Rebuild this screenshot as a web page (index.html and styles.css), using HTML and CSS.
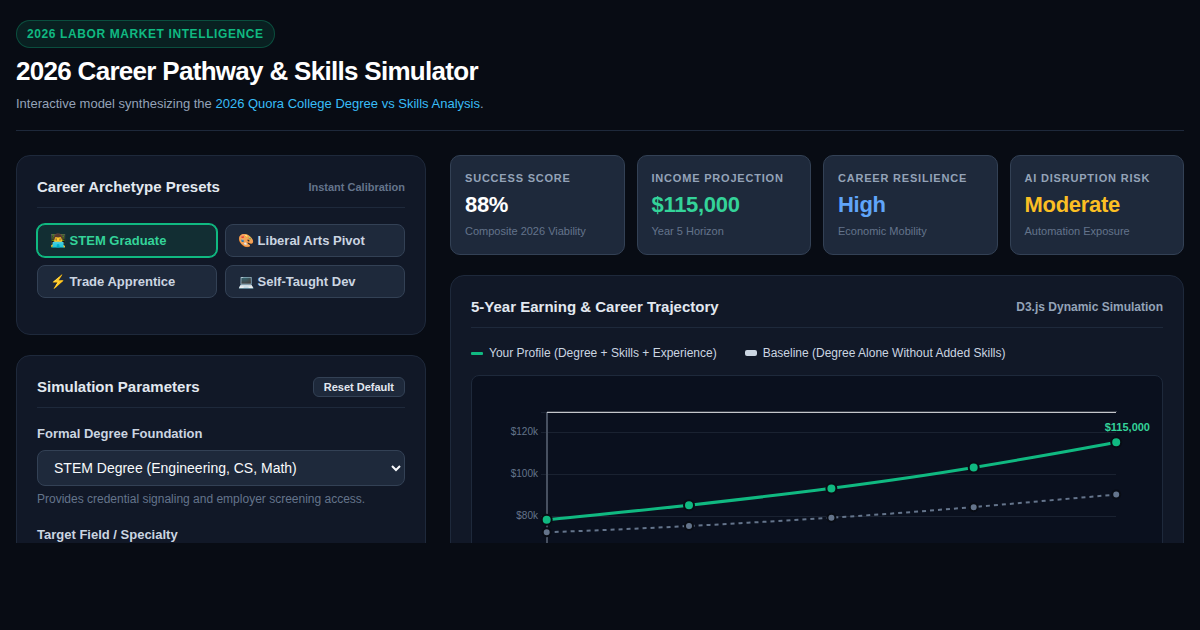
FILE: index.html
```html
<!DOCTYPE html>
<html lang="en">
<head>
<meta charset="utf-8">
<meta name="viewport" content="width=device-width, initial-scale=1">
<title>2026 Career Pathway &amp; Skills Simulator</title>
<link rel="stylesheet" href="styles.css">
</head>
<body>
<div class="app">
  <header class="header">
    <span class="badge">2026 LABOR MARKET INTELLIGENCE</span>
    <h1 class="title">2026 Career Pathway &amp; Skills Simulator</h1>
    <p class="subtitle">Interactive model synthesizing the <a href="#analysis">2026 Quora College Degree vs Skills Analysis</a>.</p>
  </header>
  <div class="layout">
    <div class="column">
      <section class="panel presets-panel">
        <div class="panel-head">
          <h2 class="panel-title">Career Archetype Presets</h2>
          <span class="hint">Instant Calibration</span>
        </div>
        <div class="presets">
          <button type="button" class="preset active">👨‍💻 STEM Graduate</button>
          <button type="button" class="preset">🎨 Liberal Arts Pivot</button>
          <button type="button" class="preset">⚡ Trade Apprentice</button>
          <button type="button" class="preset">💻 Self-Taught Dev</button>
        </div>
      </section>
      <section class="panel">
        <div class="panel-head">
          <h2 class="panel-title">Simulation Parameters</h2>
          <button type="button" class="reset">Reset Default</button>
        </div>
        <div class="field">
          <label class="label" for="degree">Formal Degree Foundation</label>
          <select class="select" id="degree"><option>STEM Degree (Engineering, CS, Math)</option></select>
          <p class="help">Provides credential signaling and employer screening access.</p>
        </div>
        <div class="field">
          <label class="label" for="specialty">Target Field / Specialty</label>
          <select class="select" id="specialty"></select>
        </div>
      </section>
    </div>
    <div class="column">
      <div class="metrics">
        <div class="metric"><span class="metric-name">SUCCESS SCORE</span><strong class="metric-value">88%</strong><span class="metric-note">Composite 2026 Viability</span></div>
        <div class="metric"><span class="metric-name">INCOME PROJECTION</span><strong class="metric-value green">$115,000</strong><span class="metric-note">Year 5 Horizon</span></div>
        <div class="metric"><span class="metric-name">CAREER RESILIENCE</span><strong class="metric-value blue">High</strong><span class="metric-note">Economic Mobility</span></div>
        <div class="metric"><span class="metric-name">AI DISRUPTION RISK</span><strong class="metric-value amber">Moderate</strong><span class="metric-note">Automation Exposure</span></div>
      </div>
      <section class="panel">
        <div class="panel-head">
          <h2 class="panel-title">5-Year Earning &amp; Career Trajectory</h2>
          <span class="tag">D3.js Dynamic Simulation</span>
        </div>
        <div class="legend">
          <span class="legend-item"><i class="swatch"></i>Your Profile (Degree + Skills + Experience)</span>
          <span class="legend-item"><i class="swatch baseline"></i>Baseline (Degree Alone Without Added Skills)</span>
        </div>
        <div class="chart">
          <svg viewBox="0 0 690 320" role="img" aria-label="Earnings over five years">
            <g class="grid">
              <path d="M69 36.5H75M69 56.5H644M69 98.5H644M69 140.5H644M69 182.5H644"/>
            </g>
            <path class="axis" d="M75 36V260"/>
            <path class="domain-shade" d="M75 35.5H645"/>
            <path class="domain" d="M75 36.5H644"/>
            <g class="ticks">
              <text x="66" y="59">$120k</text>
              <text x="66" y="101">$100k</text>
              <text x="66" y="143">$80k</text>
            </g>
            <path class="line-base" d="M74.7 156.3C122 154.5 169.5 152.5 217 150S312 144.7 359.4 141.7S454 135 501.7 131S596.5 122.6 644.2 118.6"/>
            <path class="line-main" d="M74.7 143.7C122 139 169.5 134.5 217 129.2S312 118.5 359.4 112.3S454 99.5 501.7 91.5S596.5 75.5 644.2 66.3"/>
            <g class="dots-base">
              <circle cx="74.7" cy="156.3" r="4"/><circle cx="217" cy="150" r="4"/><circle cx="359.4" cy="141.7" r="4"/><circle cx="501.7" cy="131.2" r="4"/><circle cx="644.2" cy="118.6" r="4"/>
            </g>
            <g class="dots-main">
              <circle cx="74.7" cy="143.7" r="5"/><circle cx="217" cy="129.2" r="5"/><circle cx="359.4" cy="112.4" r="5"/><circle cx="501.7" cy="91.5" r="5"/><circle cx="644.2" cy="66.3" r="5"/>
            </g>
            <text class="callout" x="678" y="55">$115,000</text>
          </svg>
        </div>
      </section>
    </div>
  </div>
</div>
</body>
</html>
```
FILE: styles.css
```css
* { box-sizing: border-box; }

body {
  margin: 0;
  background: #080c14;
  color: #e2e8f0;
  font-family: "Liberation Sans", Arial, sans-serif;
}

h1, h2, p { margin: 0; }

/* The tool shows the part of the simulator above the footer strip. */
.app {
  height: calc(100vh - 87px);
  overflow: hidden;
  padding: 20px 16px 0;
}

.header {
  display: flex;
  flex-direction: column;
  align-items: flex-start;
  padding-bottom: 18px;
  margin-bottom: 24px;
  border-bottom: 1px solid #1e293b;
}

.badge {
  padding: 0 10px;
  border: 1px solid rgba(16, 185, 129, 0.3);
  border-radius: 14px;
  background: rgba(16, 185, 129, 0.12);
  color: #10b981;
  font-size: 12px;
  font-weight: 700;
  line-height: 26px;
  letter-spacing: 0.6px;
}

.title {
  margin: 8px 0;
  color: #fff;
  font-size: 26px;
  line-height: 31px;
  letter-spacing: -0.7px;
}

.subtitle {
  color: #94a3b8;
  font-size: 13px;
  line-height: 17px;
}

.subtitle a { color: #38bdf8; text-decoration: none; }

.layout {
  display: grid;
  grid-template-columns: 410px minmax(0, 1fr);
  gap: 24px;
  align-items: start;
}

.column { display: grid; gap: 20px; }

.panel {
  padding: 20px;
  border: 1px solid #1e293b;
  border-radius: 14px;
  background: #111827;
}

.presets-panel { padding-bottom: 36px; }

.panel-head {
  display: flex;
  align-items: center;
  justify-content: space-between;
  height: 32px;
  padding-bottom: 9px;
  margin-bottom: 16px;
  border-bottom: 1px solid #1e293b;
}

.panel-title { font-size: 15px; line-height: 20px; }

.hint { color: #64748b; font-size: 11px; font-weight: 700; }

.tag { color: #94a3b8; font-size: 12px; font-weight: 700; }

.presets {
  display: grid;
  grid-template-columns: 1fr 1fr;
  gap: 8px;
}

.preset {
  padding: 0 12px;
  border: 1px solid #334155;
  border-radius: 8px;
  background: #1e293b;
  color: #cbd5e1;
  font: 700 13px/31px "Liberation Sans", Arial, sans-serif;
  text-align: left;
}

.preset.active {
  border-color: #10b981;
  background: #122e33;
  box-shadow: 0 0 0 1px #10b981;
  color: #34d399;
}

.reset {
  padding: 0 10px;
  border: 1px solid #334155;
  border-radius: 6px;
  background: #1e293b;
  color: #e2e8f0;
  font: 700 11px/18px "Liberation Sans", Arial, sans-serif;
}

.field { margin-bottom: 18px; }

.label {
  display: block;
  margin-bottom: 6px;
  color: #cbd5e1;
  font-size: 13px;
  font-weight: 700;
  line-height: 20px;
}

.select {
  display: block;
  width: 100%;
  height: 36px;
  padding: 0 12px;
  border: 1px solid #334155;
  border-radius: 8px;
  background: #1e293b;
  color: #f8fafc;
  font: 14px "Liberation Sans", Arial, sans-serif;
}

.help {
  margin-top: 5px;
  color: #64748b;
  font-size: 12px;
  line-height: 16px;
}

.metrics {
  display: grid;
  grid-template-columns: repeat(4, minmax(0, 1fr));
  gap: 12px;
}

.metric {
  display: flex;
  flex-direction: column;
  padding: 14px;
  border: 1px solid #334155;
  border-radius: 10px;
  background: #1e293b;
}

.metric-name {
  color: #94a3b8;
  font-size: 11px;
  font-weight: 700;
  line-height: 16px;
  letter-spacing: 0.8px;
}

.metric-value {
  margin: 5px 0 3px;
  color: #fff;
  font-size: 22px;
  line-height: 28px;
  letter-spacing: -0.3px;
}

.green { color: #34d399; }
.blue { color: #60a5fa; }
.amber { color: #fbbf24; }

.metric-note {
  color: #64748b;
  font-size: 11px;
  line-height: 18px;
}

.legend {
  display: flex;
  gap: 28px;
  margin-bottom: 13px;
  color: #cbd5e1;
  font-size: 12px;
  line-height: 18px;
}

.legend-item { display: flex; align-items: center; gap: 6px; }

.swatch {
  width: 12px;
  height: 3px;
  border-radius: 1px;
  background: #10b981;
}

.swatch.baseline {
  height: 6px;
  border-radius: 2px;
  background: #cbd5e1;
}

.chart {
  border: 1px solid #1e293b;
  border-radius: 8px;
  background: #0a101e;
}

.chart svg {
  display: block;
  width: 100%;
  font-family: "Liberation Sans", Arial, sans-serif;
}

.grid path { stroke: #1a2231; }
.axis { stroke: #475060; stroke-width: 2; }
.domain-shade { stroke: #393e49; }
.domain { stroke: #c5c7cc; }
.ticks text { fill: #64748b; font-size: 10px; text-anchor: end; }
.line-base, .line-main { fill: none; }
.line-base { stroke: #64748b; stroke-width: 2; stroke-dasharray: 4 4; }
.line-main { stroke: #10b981; stroke-width: 3; }
.dots-base circle { fill: #64748b; stroke: #080c14; stroke-width: 2; }
.dots-main circle { fill: #10b981; stroke: #080c14; stroke-width: 2; }
.callout { fill: #34d399; font-size: 11px; font-weight: 700; text-anchor: end; }
```
